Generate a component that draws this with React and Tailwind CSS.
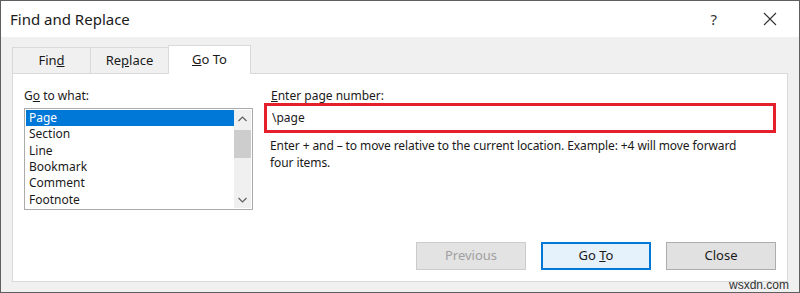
import React from 'react';

const items = ['Page', 'Section', 'Line', 'Bookmark', 'Comment', 'Footnote'];

function Tab({ children, active }) {
  if (active) {
    return (
      <div className="h-[29px] w-[83px] -mb-px z-10 flex items-center justify-center bg-white border border-b-0 border-[#d9d9d9] text-[13px] text-[#1a1a1a]">
        {children}
      </div>
    );
  }
  return (
    <div className="h-[26px] w-[78px] flex items-center justify-center bg-[#f0f0f0] border border-b-0 border-r-0 border-[#d9d9d9] text-[13px] text-[#1a1a1a]">
      {children}
    </div>
  );
}

function Btn({ children, kind }) {
  const cls =
    kind === 'disabled'
      ? 'bg-[#e3e3e3] border border-[#cccccc] text-[#a0a0a0]'
      : kind === 'default'
      ? 'bg-[#e5f1fb] border-2 border-[#0078d7] text-[#1a1a1a]'
      : 'bg-[#e1e1e1] border border-[#adadad] text-[#1a1a1a]';
  return (
    <div className={`w-[110px] h-[28px] flex items-center justify-center text-[13px] ${cls}`}>
      {children}
    </div>
  );
}

export default function App() {
  return (
    <div
      className="relative w-[800px] h-[293px] border border-[#5f5f5f] bg-[#f0f0f0] flex flex-col overflow-hidden"
      style={{ fontFamily: '"Noto Sans", "Open Sans", sans-serif' }}
    >
      {/* title bar */}
      <div className="h-[36px] bg-white flex items-center pl-[9px] pr-[22px] shrink-0">
        <span className="text-[15px] text-[#1a1a1a]">Find and Replace</span>
        <span className="ml-auto text-[15px] text-[#333] mr-[46px]">?</span>
        <svg width="14" height="14" viewBox="0 0 14 14" className="text-[#333]">
          <path d="M1 1 L13 13 M13 1 L1 13" stroke="currentColor" strokeWidth="1.1" fill="none" />
        </svg>
      </div>

      <div className="px-[11px] pt-[8px] flex flex-col">
        {/* tabs */}
        <div className="flex items-end">
          <Tab>
            <span>
              Fin<span className="underline">d</span>
            </span>
          </Tab>
          <Tab>
            <span>
              Re<span className="underline">p</span>lace
            </span>
          </Tab>
          <Tab active>
            <span>
              <span className="underline">G</span>o To
            </span>
          </Tab>
        </div>

        {/* panel */}
        <div className="w-[776px] h-[209px] bg-white border border-[#d9d9d9] flex flex-col px-[11px] pt-[14px] pb-[11px]">
          <div className="flex">
            {/* left column */}
            <div className="w-[237px] flex flex-col">
              <div className="text-[12px] text-[#1a1a1a] leading-[16px]">
                G<span className="underline">o</span> to what:
              </div>
              <div className="mt-[4px] h-[102px] border border-[#ababab] flex p-px">
                <div className="flex-1 flex flex-col">
                  {items.map((it, i) => (
                    <div
                      key={it}
                      className={`h-[16.7px] pl-[3px] text-[12px] leading-[16px] ${
                        i === 0 ? 'bg-[#0078d7] text-white' : 'text-[#1a1a1a]'
                      }`}
                    >
                      {it}
                    </div>
                  ))}
                </div>
                <div className="w-[17px] bg-[#f0f0f0] flex flex-col items-center">
                  <div className="h-[17px] flex items-center justify-center">
                    <svg width="9" height="6" viewBox="0 0 9 6">
                      <path d="M0.5 5 L4.5 1 L8.5 5" stroke="#606060" strokeWidth="1.2" fill="none" />
                    </svg>
                  </div>
                  <div className="mt-[3px] w-[17px] h-[28px] bg-[#cdcdcd]" />
                  <div className="flex-1" />
                  <div className="h-[17px] flex items-center justify-center">
                    <svg width="9" height="6" viewBox="0 0 9 6">
                      <path d="M0.5 1 L4.5 5 L8.5 1" stroke="#606060" strokeWidth="1.2" fill="none" />
                    </svg>
                  </div>
                </div>
              </div>
            </div>

            {/* right column */}
            <div className="ml-[11px] flex-1 flex flex-col">
              <div className="pl-[7px] text-[12px] text-[#1a1a1a] leading-[16px]">
                <span className="underline">E</span>nter page number:
              </div>
              <div className="mt-[-1px] w-[512px] h-[30px] border-[3px] border-[#e3202c] bg-white flex items-center pl-[5px] text-[12px] text-[#1a1a1a]">
                \page
              </div>
              <div className="mt-[4px] pl-[6px] text-[12px] leading-[17px] tracking-[-0.1px] text-[#1a1a1a]">
                Enter + and – to move relative to the current location. Example: +4 will move forward
                <br />
                four items.
              </div>
            </div>
          </div>

          <div className="mt-auto flex justify-end gap-[15px]">
            <Btn kind="disabled">Previous</Btn>
            <Btn kind="default">
              <span>
                Go <span className="underline">T</span>o
              </span>
            </Btn>
            <Btn>Close</Btn>
          </div>
        </div>
      </div>

      <div className="absolute right-[10px] bottom-[1px] text-[12px] text-[#333] leading-[12px]" style={{ fontFamily: '"Liberation Sans", sans-serif' }}>
        wsxdn.com
      </div>
    </div>
  );
}
